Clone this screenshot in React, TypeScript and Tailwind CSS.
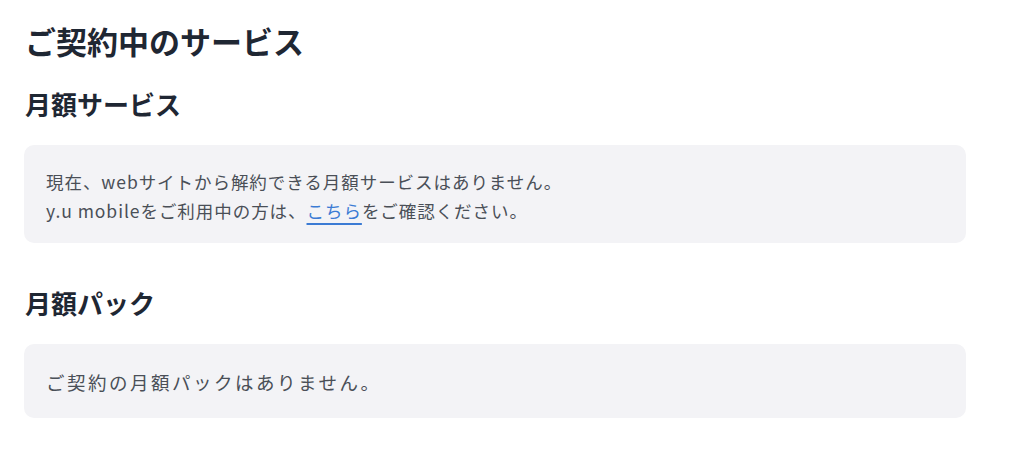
import React from 'react';

const font = { fontFamily: '"Noto Sans CJK JP", "Noto Sans", sans-serif' };

const InfoBox: React.FC<{ children: React.ReactNode; className?: string }> = ({ children, className }) => (
  <div className={`bg-[#f3f3f6] rounded-[10px] px-[22px] leading-[29px] text-[#4a4f57] ${className ?? ''}`}>
    {children}
  </div>
);

export default function App() {
  return (
    <div className="bg-white min-h-screen pl-6 pt-[21px]" style={font}>
      <div className="w-[942px]">
        <h1 className="text-[31px] leading-[40px] font-bold text-[#1f2733] ml-[1px]">ご契約中のサービス</h1>

        <h2 className="mt-[26px] text-[26px] leading-[34px] font-bold text-[#1f2733] ml-[1px]">月額サービス</h2>
        <InfoBox className="mt-[24px] pt-[22px] pb-[18px] text-[17.5px] tracking-[0.95px]">
          <p>現在、webサイトから解約できる月額サービスはありません。</p>
          <p>
            y.u mobileをご利用中の方は、
            <a href="#" className="text-[#3b7bd4] underline decoration-2 underline-offset-[5px] decoration-[#3b7bd4]">こちら</a>
            をご確認ください。
          </p>
        </InfoBox>

        <h2 className="mt-[43px] text-[26px] leading-[34px] font-bold text-[#1f2733] ml-[1px]">月額パック</h2>
        <InfoBox className="mt-[24px] pt-[24px] pb-[21px] text-[18.5px] tracking-[2.5px]">
          <p>ご契約の月額パックはありません。</p>
        </InfoBox>
      </div>
    </div>
  );
}
